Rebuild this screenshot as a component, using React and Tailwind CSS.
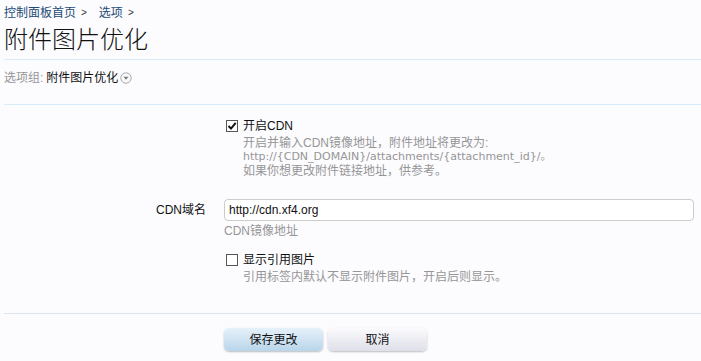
import React from "react";

const font = { fontFamily: '"Liberation Sans", "Noto Sans CJK SC", sans-serif' };

const Check = ({ checked }) => (
  <span className="w-[12px] h-[12px] border border-[#555] bg-white flex items-center justify-center shrink-0">
    {checked && (
      <svg width="10" height="10" viewBox="0 0 10 10">
        <path d="M1.5 5 L4 7.6 L8.7 1.8" fill="none" stroke="#111" strokeWidth="2" />
      </svg>
    )}
  </span>
);

export default function App() {
  return (
    <div className="w-[701px] h-[361px] bg-[#fcfcff] text-[12px] text-[#111] overflow-hidden" style={font}>
      {/* breadcrumb */}
      <div className="h-[26px] pl-[4px] flex items-center gap-[5px] text-[#1c4a75] leading-[16px]">
        <span>控制面板首页</span>
        <span className="text-[10px] text-[#333] mr-[7px]">&gt;</span>
        <span>选项</span>
        <span className="text-[10px] text-[#333]">&gt;</span>
      </div>

      {/* title */}
      <h1 className="pl-[4px] text-[24px] leading-[28px] font-light text-[#111] mb-[5px]">附件图片优化</h1>

      <div className="ml-[4px] border-t border-[#d6ebfb] pt-[10px] pb-[18px]">
        <div className="flex items-center leading-[16px]">
          <span className="text-[#969696]">选项组:</span>
          <span className="ml-[3px]">附件图片优化</span>
          <svg className="ml-[2px]" width="12" height="12" viewBox="0 0 12 12">
            <circle cx="6" cy="6" r="5.2" fill="#fafafa" stroke="#aaa" />
            <path d="M3.5 4.8 L8.5 4.8 L6 7.8 Z" fill="#777" />
          </svg>
        </div>
      </div>

      {/* form */}
      <div className="ml-[4px] border-t border-[#d6ebfb] pb-[29px]">
        <div className="flex pt-[13px]">
          <div className="w-[203px]" />
          <div className="ml-[17px]">
            <label className="flex items-center gap-[5px] leading-[16px] pl-[2px]">
              <Check checked />
              <span>开启CDN</span>
            </label>
            <div className="pl-[19px] mt-[2px] leading-[14px] text-[#969696]">
              <div>开启并输入CDN镜像地址，附件地址将更改为:</div>
              <div className="text-[11px]" style={{ fontFamily: '"DejaVu Sans", "Noto Sans CJK SC", sans-serif' }}>
                http://{"{CDN_DOMAIN}"}/attachments/{"{attachment_id}"}/。
              </div>
              <div>如果你想更改附件链接地址，供参考。</div>
            </div>
          </div>
        </div>

        <div className="flex mt-[21px]">
          <div className="w-[202px] text-right h-[22px] leading-[22px]">CDN域名</div>
          <div className="ml-[18px] flex-1 pr-[7px]">
            <div className="h-[22px] border border-[#ccc] rounded-[4px] bg-white px-[4px] leading-[20px]">
              http://cdn.xf4.org
            </div>
            <div className="mt-[3px] leading-[14px] text-[#969696]">CDN镜像地址</div>
            <label className="mt-[14px] flex items-center gap-[5px] leading-[16px] pl-[2px]">
              <Check />
              <span>显示引用图片</span>
            </label>
            <div className="pl-[19px] mt-[2px] leading-[14px] text-[#969696]">
              引用标签内默认不显示附件图片，开启后则显示。
            </div>
          </div>
        </div>
      </div>

      {/* buttons */}
      <div className="ml-[4px] border-t border-[#dde5ee] pt-[14px] flex">
        <div className="w-[203px]" />
        <div className="ml-[17px] flex gap-[5px]">
          <button className="w-[99px] h-[23px] rounded-[5px] bg-gradient-to-b from-[#e6f1fa] to-[#b8d5ea] shadow-[0_1px_2px_rgba(0,0,0,0.25)] text-[12px] text-[#111]">
            保存更改
          </button>
          <button className="w-[99px] h-[23px] rounded-[5px] bg-gradient-to-b from-[#fbfbfd] to-[#dedfe9] shadow-[0_1px_2px_rgba(0,0,0,0.25)] text-[12px] text-[#111]">
            取消
          </button>
        </div>
      </div>
    </div>
  );
}
